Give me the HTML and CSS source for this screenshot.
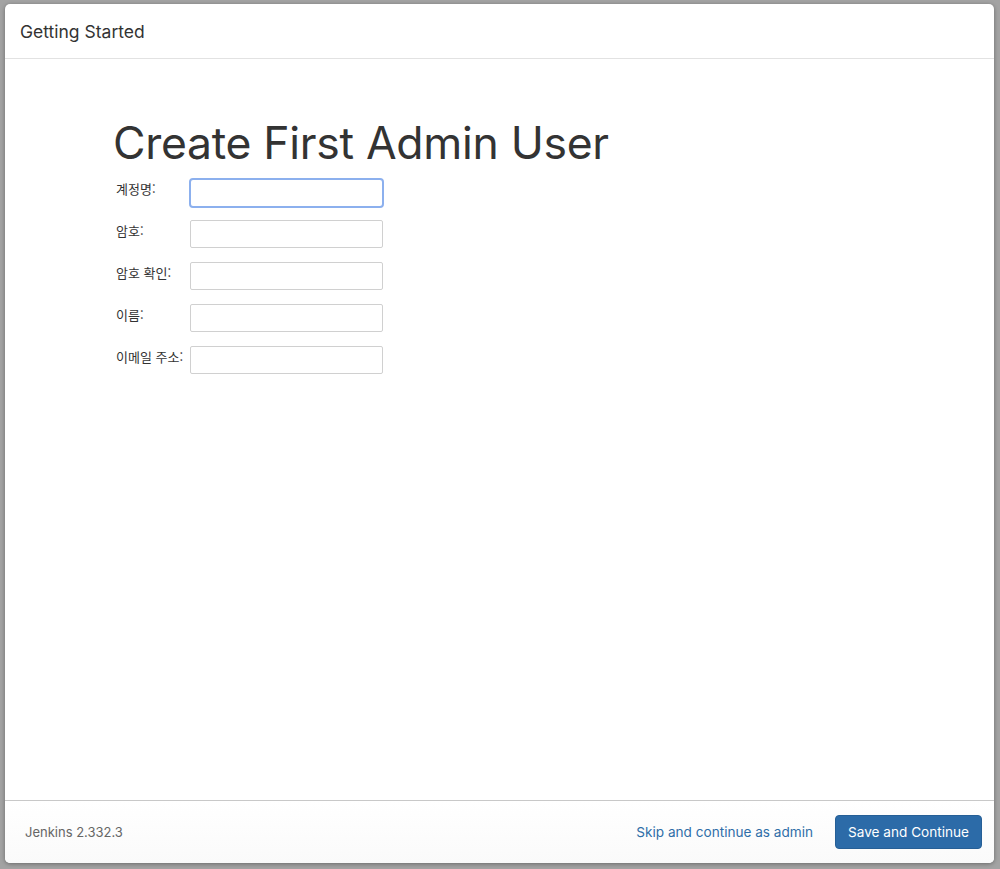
FILE: index.html
```html
<!DOCTYPE html>
<html lang="ko">
<head>
<meta charset="utf-8">
<title>Getting Started</title>
<link rel="stylesheet" href="styles.css">
</head>
<body>
<div class="modal">
  <div class="modal-header">Getting Started</div>
  <div class="modal-body">
    <h1 class="title">Create First Admin User</h1>
    <form class="form">
      <div class="row"><label class="label">계정명:</label><input class="field focused" type="text"></div>
      <div class="row"><label class="label">암호:</label><input class="field" type="password"></div>
      <div class="row"><label class="label">암호 확인:</label><input class="field" type="password"></div>
      <div class="row"><label class="label">이름:</label><input class="field" type="text"></div>
      <div class="row"><label class="label">이메일 주소:</label><input class="field" type="text"></div>
    </form>
  </div>
  <div class="modal-footer">
    <span class="version">Jenkins 2.332.3</span>
    <div class="actions">
      <a class="skip" href="#">Skip and continue as admin</a>
      <button class="save" type="button">Save and Continue</button>
    </div>
  </div>
</div>
</body>
</html>
```
FILE: styles.css
```css
html, body {
  margin: 0;
  height: 100%;
}
body {
  background: #a3a3a3;
  padding: 4px 6px 6px 5px;
  box-sizing: border-box;
  font-family: Inter, "Noto Sans CJK KR", "Liberation Sans", sans-serif;
  color: #333;
}
.modal {
  height: 859px;
  background: #fff;
  border-radius: 5px;
  box-shadow: 0 1px 4px rgba(0,0,0,0.35);
  display: flex;
  flex-direction: column;
  overflow: hidden;
}
.modal-header {
  height: 55px;
  box-sizing: border-box;
  border-bottom: 1px solid #e2e2e2;
  padding: 0 15px;
  display: flex;
  align-items: center;
  font-size: 17.5px;
  color: #333;
}
.modal-body {
  flex: 1;
  padding: 56px 108px 0;
}
.title {
  margin: 0;
  font-weight: 400;
  font-size: 44.5px;
  line-height: 56px;
  color: #333;
  letter-spacing: -0.3px;
}
.form {
  display: flex;
  flex-direction: column;
  gap: 14px;
  margin-top: 7px;
  padding-left: 3px;
}
.row {
  display: flex;
  align-items: center;
  height: 28px;
}
.label {
  width: 74px;
  font-size: 13px;
  font-family: "Noto Sans CJK KR", sans-serif;
  color: #333;
  margin-top: -8px;
}
.field {
  width: 193px;
  height: 28px;
  box-sizing: border-box;
  border: 1px solid #d0d0d0;
  border-radius: 2px;
  padding: 0 6px;
  margin: 0;
  outline: none;
  background: #fff;
}
.field.focused {
  border: 2px solid #8cb0ee;
  border-radius: 4px;
  width: 195px;
  height: 30px;
  margin-left: -1px;
  margin-top: 1px;
}
.modal-footer {
  height: 63px;
  box-sizing: border-box;
  border-top: 1px solid #c8c8c8;
  background: linear-gradient(#fff, #fafafa);
  display: flex;
  align-items: center;
  justify-content: space-between;
  padding: 0 12px 0 20px;
}
.version {
  font-size: 13px;
  color: #666;
}
.actions {
  display: flex;
  align-items: center;
  gap: 22px;
}
.skip {
  color: #2f6ea8;
  text-decoration: none;
  font-size: 13.6px;
}
.save {
  background: #2c6ba8;
  color: #fff;
  border: 1px solid #265f96;
  border-radius: 4px;
  height: 34px;
  padding: 0 12px;
  font-family: Inter, "Liberation Sans", sans-serif;
  font-size: 13.6px;
}
```
